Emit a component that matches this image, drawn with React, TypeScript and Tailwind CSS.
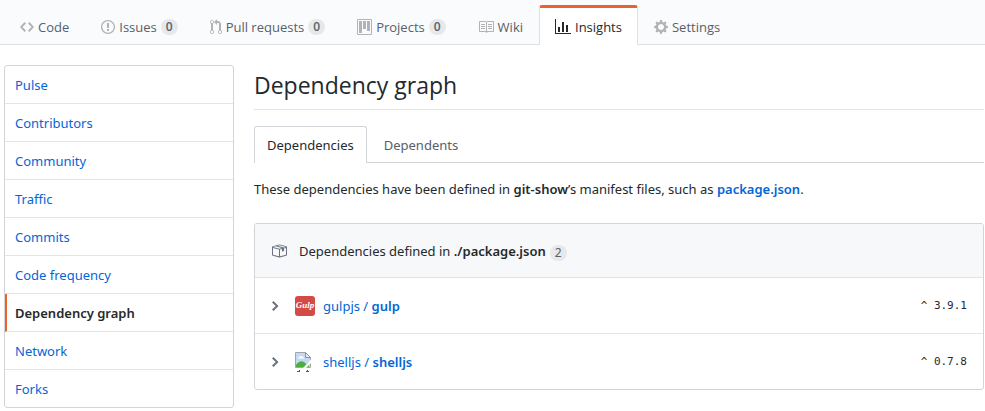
import type { ReactNode } from "react";

type IconProps = { d: string; w: number; className?: string };

function Octicon({ d, w, className = "" }: IconProps) {
  return (
    <svg
      width={w}
      height={16}
      viewBox={`0 0 ${w} 16`}
      fill="currentColor"
      fillRule="evenodd"
      aria-hidden="true"
      className={`shrink-0 ${className}`}
    >
      <path d={d} />
    </svg>
  );
}

const icons = {
  code: { w: 14, d: "M9.5 3L8 4.5 11.5 8 8 11.5 9.5 13 14 8 9.5 3zm-5 0L0 8l4.5 5L6 11.5 2.5 8 6 4.5 4.5 3z" },
  issue: { w: 14, d: "M7 2.3c3.14 0 5.7 2.56 5.7 5.7s-2.56 5.7-5.7 5.7A5.71 5.71 0 0 1 1.3 8c0-3.14 2.56-5.7 5.7-5.7zM7 1C3.14 1 0 4.14 0 8s3.14 7 7 7 7-3.14 7-7-3.14-7-7-7zm1 3H6v5h2V4zm0 6H6v2h2v-2z" },
  pull: { w: 12, d: "M11 11.28V5c-.03-.78-.34-1.47-.94-2.06C9.46 2.35 8.78 2.03 8 2H7V0L4 3l3 3V4h1c.27.02.48.11.69.31.21.2.3.42.31.69v6.28A1.993 1.993 0 0 0 10 15a1.993 1.993 0 0 0 1-3.72zm-1 2.92c-.66 0-1.2-.55-1.2-1.2 0-.65.55-1.2 1.2-1.2.65 0 1.2.55 1.2 1.2 0 .65-.55 1.2-1.2 1.2zM4 3c0-1.11-.89-2-2-2a1.993 1.993 0 0 0-1 3.72v6.56A1.993 1.993 0 0 0 2 15a1.993 1.993 0 0 0 1-3.72V4.72c.59-.34 1-.98 1-1.72zm-.8 10c0 .66-.55 1.2-1.2 1.2-.65 0-1.2-.55-1.2-1.2 0-.65.55-1.2 1.2-1.2.65 0 1.2.55 1.2 1.2zM2 4.2C1.34 4.2.8 3.65.8 3c0-.65.55-1.2 1.2-1.2.65 0 1.2.55 1.2 1.2 0 .65-.55 1.2-1.2 1.2z" },
  project: { w: 15, d: "M10 12h3V2h-3v10zm-4-2h3V2H6v8zm-4 4h3V2H2v12zm-1 1h13V1H1v14zM14 0H1a1 1 0 0 0-1 1v14a1 1 0 0 0 1 1h13a1 1 0 0 0 1-1V1a1 1 0 0 0-1-1z" },
  book: { w: 16, d: "M3 5h4v1H3V5zm0 3h4V7H3v1zm0 2h4V9H3v1zm11-5h-4v1h4V5zm0 2h-4v1h4V7zm0 2h-4v1h4V9zm2-6v9c0 .55-.45 1-1 1H9.5l-1 1-1-1H2c-.55 0-1-.45-1-1V3c0-.55.45-1 1-1h5.5l1 1 1-1H15c.55 0 1 .45 1 1zm-8 .5L7.5 3H2v9h6V3.5zm7-.5H9.5l-.5.5V12h6V3z" },
  graph: { w: 16, d: "M16 14v1H0V0h1v14h15zM5 13H3V8h2v5zm4 0H7V3h2v10zm4 0h-2V6h2v7z" },
  gear: { w: 14, d: "M14 8.77v-1.6l-1.94-.64-.45-1.09.88-1.84-1.13-1.13-1.81.91-1.09-.45-.69-1.92h-1.6l-.63 1.94-1.11.45-1.84-.88-1.13 1.13.91 1.81-.45 1.09L0 7.23v1.59l1.94.64.45 1.09-.88 1.84 1.13 1.13 1.81-.91 1.09.45.69 1.92h1.59l.63-1.94 1.11-.45 1.84.88 1.13-1.13-.92-1.81.47-1.09L14 8.75v.02zM7 11c-1.66 0-3-1.34-3-3s1.34-3 3-3 3 1.34 3 3-1.34 3-3 3z" },
  package: { w: 16, d: "M1 4.27v7.47c0 .45.3.84.75.97l6.5 1.73c.16.05.34.05.5 0l6.5-1.73c.45-.13.75-.52.75-.97V4.27c0-.45-.3-.84-.75-.97l-6.5-1.74a1.4 1.4 0 0 0-.5 0L1.75 3.3c-.45.13-.75.52-.75.97zm7 9.09l-6-1.59V5l6 1.61v6.75zM2 4l2.5-.67L11 5.06l-2.5.67L2 4zm13 7.77l-6 1.59V6.61l2-.55V8.5l2-.53V5.53L15 5v6.77zm-2-7.24L6.5 2.8l2-.53L15 4l-2 .53z" },
  chevron: { w: 8, d: "M7.5 8l-5 5L1 11.5 4.75 8 1 4.5 2.5 3l5 5z" },
};

const repoTabs = [
  { label: "Code", icon: icons.code },
  { label: "Issues", icon: icons.issue, count: 0 },
  { label: "Pull requests", icon: icons.pull, count: 0 },
  { label: "Projects", icon: icons.project, count: 0 },
  { label: "Wiki", icon: icons.book },
  { label: "Insights", icon: icons.graph, selected: true },
  { label: "Settings", icon: icons.gear },
];

const menu = [
  "Pulse",
  "Contributors",
  "Community",
  "Traffic",
  "Commits",
  "Code frequency",
  "Dependency graph",
  "Network",
  "Forks",
];

function RepoNav() {
  return (
    <nav
      aria-label="Repository"
      className="flex border-b border-[#dfe2e5] bg-[#fafbfc] pt-[5px] pl-1 font-['Open_Sans',sans-serif]"
    >
      {repoTabs.map((t) => (
        <a
          key={t.label}
          href="#"
          aria-current={t.selected ? "page" : undefined}
          className={`-mb-px flex h-10 items-center gap-1 rounded-t-[3px] border-x border-t-3 px-[15px] whitespace-nowrap ${
            t.selected
              ? "border-x-[#dfe2e5] border-t-[#e8642a] bg-white text-[#24292e]"
              : "border-transparent text-[#586069]"
          }`}
        >
          <Octicon {...t.icon} className={t.selected ? "" : "text-[#b1b4b7]"} />
          <span>{t.label}</span>
          {t.count !== undefined && (
            <span className="rounded-full bg-[#e6e8ea] px-[5px] text-xs leading-4 font-semibold">{t.count}</span>
          )}
        </a>
      ))}
    </nav>
  );
}

function SideMenu() {
  return (
    <nav
      aria-label="Insights"
      className="flex w-[230px] shrink-0 flex-col divide-y divide-[#e1e4e8] overflow-hidden rounded-[3px] border border-[#d1d5da]"
    >
      {menu.map((m) =>
        m === "Dependency graph" ? (
          <a
            key={m}
            href="#"
            aria-current="page"
            className="border-l-2 border-l-[#e8642a] pt-[9px] pb-2 pl-2 font-semibold text-[#24292e]"
          >
            {m}
          </a>
        ) : (
          <a key={m} href="#" className="pt-[9px] pb-2 pl-[10px] text-[#0366d6]">
            {m}
          </a>
        ),
      )}
    </nav>
  );
}

function GulpAvatar() {
  return (
    <span
      aria-hidden="true"
      className="flex size-5 items-center justify-center rounded-[3px] bg-[#d34a47] font-['Liberation_Serif',serif] text-[9px] leading-none font-bold text-white italic"
    >
      Gulp
    </span>
  );
}

function BrokenAvatar() {
  return (
    <svg width={20} height={20} viewBox="0 0 20 20" aria-hidden="true">
      <path d="M.5.5h10l5 5v10H.5z" fill="#fff" stroke="#a5a5a5" />
      <path d="M1 1h9v5h5v9H1z" fill="#c3d9f5" />
      <path d="M3 6.500c0-1.200 1-1.500 1.500-1.500C5 3.500 8 3.500 8 5.500c1 0 1.200.5 1.200 1z" fill="#fff" />
      <path d="M1 15v-2c3-4.500 7-5 10-1l3-1v4z" fill="#4caf3f" />
      <path d="M10.500.5v5h5z" fill="#eee" stroke="#8f8f8f" />
      <path d="M8 16l8-8.500V11l-5 5z" fill="#fff" />
      <path d="M2 19.500h3M4.500 18v2M12.500 18v2M11 19.500h3" stroke="#0366d6" />
    </svg>
  );
}

function DependencyRow({ owner, name, version, avatar }: { owner: string; name: string; version: string; avatar: ReactNode }) {
  return (
    <li className="flex h-14 items-center border-t border-[#e1e4e8] px-4">
      <button type="button" aria-label={`Expand ${name}`} className="flex w-6 text-[#6a737d]">
        <Octicon {...icons.chevron} />
      </button>
      {avatar}
      <a href="#" className="ml-2 text-[#0366d6]">
        {owner} / <span className="font-semibold">{name}</span>
      </a>
      <span className="ml-auto font-['DejaVu_Sans_Mono',monospace] text-[11px]">^ {version}</span>
    </li>
  );
}

export default function App() {
  return (
    <div className="min-h-screen bg-white font-['Noto_Sans','Open_Sans',sans-serif] text-[13px] leading-5 text-[#24292e]">
      <RepoNav />
      <div className="flex items-start gap-5 pt-5 pr-px pl-1">
        <SideMenu />
        <main className="min-w-0 flex-1">
          <h1 className="border-b border-[#e1e4e8] pt-1 pb-2 font-['Open_Sans',sans-serif] text-[23px] leading-8">
            Dependency graph
          </h1>
          <nav aria-label="Dependency graph" className="mt-4 flex border-b border-[#d1d5da]">
            <a
              href="#"
              aria-current="page"
              className="-mb-px rounded-t-[3px] border border-b-0 border-[#d1d5da] bg-white px-3 py-2"
            >
              Dependencies
            </a>
            <a href="#" className="px-[17px] pt-[9px] text-[#586069]">
              Dependents
            </a>
          </nav>
          <p className="mt-4">
            These dependencies have been defined in <strong className="font-semibold">git-show</strong>’s manifest files,
            such as{" "}
            <a href="#" className="font-semibold text-[#0366d6]">
              package.json
            </a>
            .
          </p>
          <section className="mt-6 overflow-hidden rounded-[3px] border border-[#d1d5da]">
            <h2 className="flex h-[53px] items-center bg-[#f6f8fa] px-4">
              <Octicon {...icons.package} className="text-[#6a737d]" />
              <span className="ml-3">
                Dependencies defined in <strong className="font-semibold">./package.json</strong>
              </span>
              <span className="mt-1 ml-1 rounded-full bg-[#e6e8ea] px-[5px] text-xs leading-4 text-[#586069]">2</span>
            </h2>
            <ul>
              <DependencyRow owner="gulpjs" name="gulp" version="3.9.1" avatar={<GulpAvatar />} />
              <DependencyRow owner="shelljs" name="shelljs" version="0.7.8" avatar={<BrokenAvatar />} />
            </ul>
          </section>
        </main>
      </div>
    </div>
  );
}
